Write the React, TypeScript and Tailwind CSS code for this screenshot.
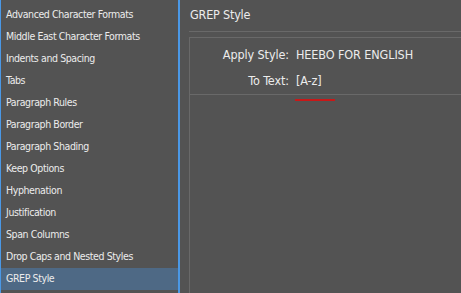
const items = [
  "Advanced Character Formats",
  "Middle East Character Formats",
  "Indents and Spacing",
  "Tabs",
  "Paragraph Rules",
  "Paragraph Border",
  "Paragraph Shading",
  "Keep Options",
  "Hyphenation",
  "Justification",
  "Span Columns",
  "Drop Caps and Nested Styles",
  "GREP Style",
];

export default function App() {
  return (
    <div className="flex h-[293px] w-[461px] overflow-hidden bg-[#535353] font-['DejaVu_Sans_Condensed','DejaVu_Sans',sans-serif] text-[#ececec]">
      <ul className="flex w-[180px] shrink-0 flex-col border-l border-r-2 border-[#4a98e6] pt-[4px]">
        {items.map((item) => (
          <li
            key={item}
            className={
              "flex h-[22px] shrink-0 items-center pl-[5px] text-[10.5px] tracking-[-0.4px] " +
              (item === "GREP Style" ? "bg-[#4e6985]" : "")
            }
          >
            {item}
          </li>
        ))}
      </ul>
      <div className="flex flex-1 flex-col pl-[9px]">
        <div className="flex h-[32px] shrink-0 items-center border-b border-[#696969] pb-[1px] pl-[1px] text-[12.5px] tracking-[-0.2px]">
          GREP Style
        </div>
        <div className="mt-[5px] flex flex-1 flex-col border-l border-t border-[#696969]">
          <div className="flex h-[57px] flex-col border-b border-[#696969] pt-[4px] text-[12.5px] tracking-[-0.1px]">
            <div className="flex h-[27px] items-center">
              <span className="w-[99px] text-right">Apply Style:</span>
              <span className="ml-[7px]">HEEBO FOR ENGLISH</span>
            </div>
            <div className="flex h-[27px] items-center">
              <span className="w-[99px] text-right">To Text:</span>
              <span className="ml-[7px]">[A-z]</span>
            </div>
          </div>
          <div className="ml-[105px] mt-[4px] h-[2px] w-[40px] bg-[#c81818]" />
        </div>
      </div>
    </div>
  );
}
